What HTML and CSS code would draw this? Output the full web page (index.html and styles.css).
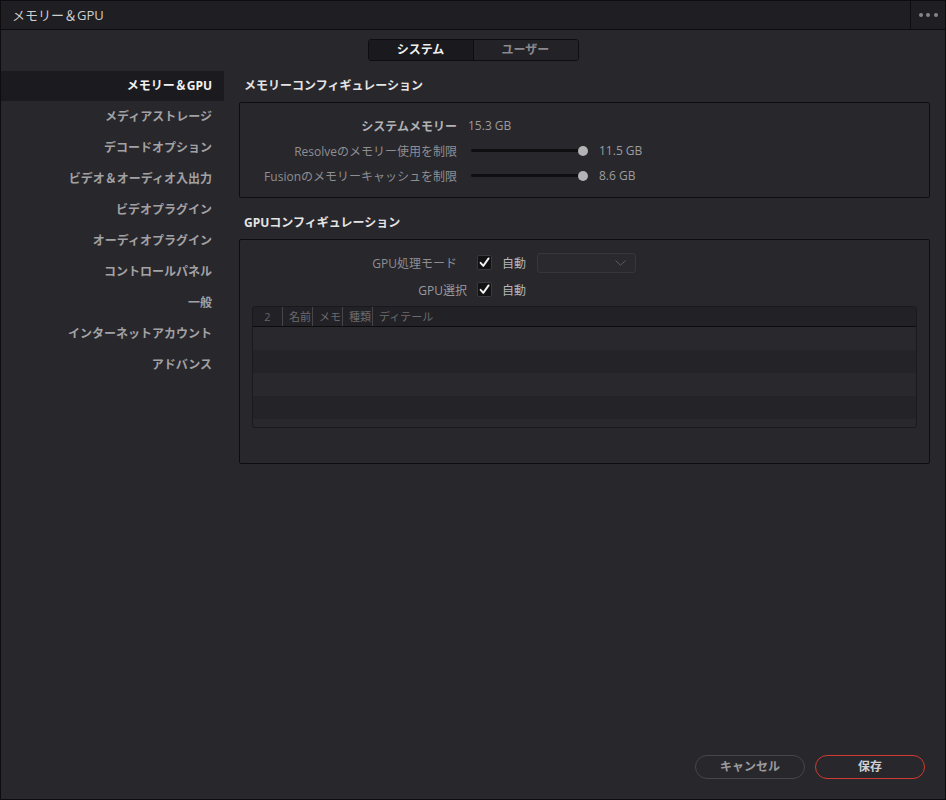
FILE: index.html
```html
<!DOCTYPE html>
<html lang="ja">
<head>
<meta charset="utf-8">
<title>メモリー＆GPU</title>
<link rel="stylesheet" href="styles.css">
</head>
<body>
<div class="window">
  <header class="titlebar">
    <div class="title">メモリー＆GPU</div>
    <div class="more"><span class="dot"></span><span class="dot"></span><span class="dot"></span></div>
  </header>
  <div class="body">
    <div class="tabs">
      <div class="seg">
        <div class="tab active">システム</div>
        <div class="tab">ユーザー</div>
      </div>
    </div>
    <div class="main">
      <nav class="sidebar">
        <div class="nav-item active">メモリー＆GPU</div>
        <div class="nav-item">メディアストレージ</div>
        <div class="nav-item">デコードオプション</div>
        <div class="nav-item">ビデオ＆オーディオ入出力</div>
        <div class="nav-item">ビデオプラグイン</div>
        <div class="nav-item">オーディオプラグイン</div>
        <div class="nav-item">コントロールパネル</div>
        <div class="nav-item">一般</div>
        <div class="nav-item">インターネットアカウント</div>
        <div class="nav-item">アドバンス</div>
      </nav>
      <section class="content">
        <h2 class="heading">メモリーコンフィギュレーション</h2>
        <div class="box mem-box">
          <div class="row">
            <div class="label label-strong">システムメモリー</div>
            <div class="value">15.3 GB</div>
          </div>
          <div class="row">
            <div class="label">Resolveのメモリー使用を制限</div>
            <div class="slider"><span class="knob"></span></div>
            <div class="value value-slider">11.5 GB</div>
          </div>
          <div class="row">
            <div class="label">Fusionのメモリーキャッシュを制限</div>
            <div class="slider"><span class="knob"></span></div>
            <div class="value value-slider">8.6 GB</div>
          </div>
        </div>

        <h2 class="heading heading-gpu">GPUコンフィギュレーション</h2>
        <div class="box gpu-box">
          <div class="grow">
            <div class="label label-mode">GPU処理モード</div>
            <div class="check"><svg width="15" height="15" viewBox="0 0 15 15"><path d="M3.6 7.8 L6.3 10.9 L11.6 3.4" fill="none" stroke="#f2f2f2" stroke-width="1.9" stroke-linecap="round" stroke-linejoin="round"/></svg></div>
            <div class="auto">自動</div>
            <div class="select"><svg width="11" height="6" viewBox="0 0 11 6"><path d="M0.5 0.5 L5.5 5.2 L10.5 0.5" fill="none" stroke="#5c5b61" stroke-width="1"/></svg></div>
          </div>
          <div class="grow">
            <div class="label label-sel">GPU選択</div>
            <div class="check"><svg width="15" height="15" viewBox="0 0 15 15"><path d="M3.6 7.8 L6.3 10.9 L11.6 3.4" fill="none" stroke="#f2f2f2" stroke-width="1.9" stroke-linecap="round" stroke-linejoin="round"/></svg></div>
            <div class="auto">自動</div>
          </div>
          <div class="table">
            <div class="thead">
              <div class="th th-num">2</div>
              <div class="th"><span class="th-text">名前</span></div>
              <div class="th"><span class="th-text">メモ</span></div>
              <div class="th"><span class="th-text">種類</span></div>
              <div class="th th-last">ディテール</div>
            </div>
            <div class="tbody">
              <div class="tr"></div>
              <div class="tr alt"></div>
              <div class="tr"></div>
              <div class="tr alt"></div>
              <div class="tr"></div>
            </div>
          </div>
        </div>
      </section>
    </div>
    <footer class="footer">
      <div class="btn">キャンセル</div>
      <div class="btn btn-save">保存</div>
    </footer>
  </div>
</div>
</body>
</html>
```

FILE: styles.css
```css
* { box-sizing: border-box; }

html, body {
  margin: 0;
  padding: 0;
  background: #28272c;
}

body {
  font-family: "Open Sans", "Noto Sans CJK JP", sans-serif;
  font-size: 12px;
  color: #a0a0a0;
}

.window {
  width: 946px;
  height: 800px;
  border: 1px solid #0d0d0f;
  background: #28272c;
  display: flex;
  flex-direction: column;
}

/* title bar */
.titlebar {
  height: 29px;
  flex: none;
  display: flex;
  align-items: stretch;
  background: #1f1e22;
  border-bottom: 1px solid #0d0d0f;
}

.title {
  flex: 1;
  padding-left: 11px;
  font-size: 13px;
  line-height: 28px;
  color: #cfcfcf;
}

.more {
  width: 35px;
  border-left: 1px solid #0d0d0f;
  display: flex;
  align-items: center;
  justify-content: center;
  gap: 3.5px;
  padding-bottom: 1px;
}

.dot {
  width: 4px;
  height: 4px;
  border-radius: 50%;
  background: #85858a;
}

/* body */
.body {
  flex: 1;
  display: flex;
  flex-direction: column;
  padding-top: 9px;
}

.tabs {
  display: flex;
  justify-content: center;
}

.seg {
  display: flex;
  border: 1px solid #0e0e10;
  border-radius: 3px;
  overflow: hidden;
  height: 22px;
}

.tab {
  width: 104px;
  text-align: center;
  line-height: 20px;
  font-weight: 700;
  color: #8a8a8e;
  background: #232226;
}

.tab.active {
  background: #1a191d;
  color: #f0f0f0;
  border-right: 1px solid #0e0e10;
  width: 105px;
}

.main {
  flex: 1;
  display: flex;
  margin-top: 10px;
}

/* sidebar */
.sidebar {
  width: 223px;
  flex: none;
  display: flex;
  flex-direction: column;
}

.nav-item {
  height: 31px;
  line-height: 31px;
  text-align: right;
  padding-right: 12px;
  font-weight: 700;
  color: #a2a2a4;
}

.nav-item.active {
  background: #1b1a1e;
  color: #f2f2f2;
  height: 30px;
  line-height: 30px;
}

/* content */
.content {
  flex: 1;
  padding-left: 15px;
  padding-right: 15px;
}

.heading {
  margin: 0;
  height: 31px;
  line-height: 30px;
  padding-left: 5px;
  font-size: 12px;
  font-weight: 700;
  color: #e4e4e4;
}

.heading-gpu {
  margin-top: 10px;
}

.box {
  border: 1px solid #0d0d0f;
  border-radius: 2px;
}

.mem-box {
  padding: 10px 0 9px;
}

.row {
  height: 25px;
  display: flex;
  align-items: center;
}

.label {
  width: 217px;
  flex: none;
  text-align: right;
  color: #8e8e92;
  white-space: nowrap;
}

.label-strong {
  color: #b2b2b4;
  font-weight: 700;
}

.value {
  margin-left: 11px;
  color: #9c9c9f;
}

.slider {
  position: relative;
  margin-left: 14px;
  width: 117px;
  height: 3px;
  border-radius: 2px;
  background: #0f0f11;
}

.knob {
  position: absolute;
  right: 0;
  top: -3.5px;
  width: 10px;
  height: 10px;
  border-radius: 50%;
  background: #b4b4b6;
}

.value-slider {
  margin-left: 11px;
}

/* gpu */
.gpu-box {
  padding: 9px 12px 35px;
}

.grow {
  height: 27px;
  display: flex;
  align-items: center;
}

.gpu-box .label {
  width: 215px;
}

.label-mode {
  padding-right: 10px;
}

.label-sel {
  color: #9a9a9d;
}

.check {
  width: 15px;
  height: 15px;
  margin-left: 10px;
  background: #121214;
  border: 1px solid #3a393e;
  border-radius: 2px;
  display: flex;
  align-items: center;
  justify-content: center;
}

.check svg {
  flex: none;
}

.auto {
  margin-left: 10px;
  color: #b6b6b8;
}

.select {
  margin-left: 11px;
  width: 99px;
  height: 20px;
  border: 1px solid #37363b;
  border-radius: 3px;
  background: #2a292e;
  display: flex;
  align-items: center;
  justify-content: flex-end;
  padding-right: 9px;
}

.table {
  margin-top: 3px;
  border: 1px solid #1a191d;
  border-radius: 3px;
  overflow: hidden;
  height: 122px;
}

.thead {
  display: flex;
  height: 20px;
  background: #222125;
  border-bottom: 1px solid #0c0c0e;
}

.th {
  width: 30px;
  flex: none;
  border-right: 1px solid #46454a;
  padding-left: 6px;
  font-size: 11px;
  line-height: 19px;
  color: #6c6c70;
  white-space: nowrap;
  overflow: hidden;
}

.th-text {
  display: block;
  width: 22px;
  overflow: hidden;
}

.th-num {
  text-align: center;
  padding-left: 0;
  color: #66666a;
}

.th-last {
  flex: 1;
  border-right: none;
}

.tbody {
  height: 100px;
  overflow: hidden;
}

.tr {
  height: 23px;
  background: #29282d;
}

.tr.alt {
  background: #242328;
}

/* footer */
.footer {
  display: flex;
  justify-content: flex-end;
  gap: 10px;
  padding: 0 20px 20px 0;
}

.btn {
  width: 110px;
  height: 24px;
  border: 1px solid #47464b;
  border-radius: 12px;
  text-align: center;
  line-height: 22px;
  font-weight: 700;
  color: #9a9a9d;
}

.btn-save {
  border-color: #d23a30;
  color: #cfcfd1;
}
```
